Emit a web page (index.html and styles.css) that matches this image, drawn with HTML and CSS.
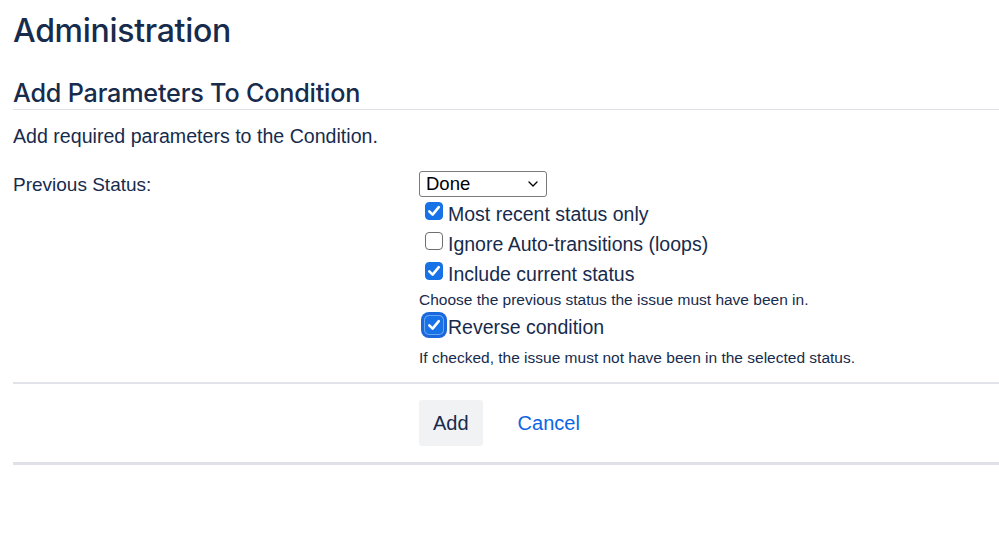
FILE: index.html
```html
<!DOCTYPE html>
<html lang="en">
<head>
<meta charset="utf-8">
<title>Administration</title>
<link rel="stylesheet" href="styles.css">
</head>
<body>
<main class="page">
  <h1 class="title">Administration</h1>
  <h2 class="section-title">Add Parameters To Condition</h2>
  <p class="intro">Add required parameters to the Condition.</p>

  <form class="form">
    <div class="field">
      <label class="field-label">Previous Status:</label>
      <div class="field-body">
        <div class="select">
          <span class="select-value">Done</span>
          <svg class="chevron" width="10" height="6" viewBox="0 0 10 6"><path d="M1 1 L5 5 L9 1" fill="none" stroke="#000" stroke-width="1.3" stroke-linecap="round" stroke-linejoin="round"/></svg>
        </div>
        <div class="checks">
          <label class="check"><span class="cb is-checked"><svg viewBox="0 0 18 18" width="18" height="18"><path d="M4.3 9.4 L7.6 12.6 L13.8 5.2" fill="none" stroke="#fff" stroke-width="2.6" stroke-linecap="round" stroke-linejoin="round"/></svg></span><span class="check-text">Most recent status only</span></label>
          <label class="check"><span class="cb"></span><span class="check-text">Ignore Auto-transitions (loops)</span></label>
          <label class="check"><span class="cb is-checked"><svg viewBox="0 0 18 18" width="18" height="18"><path d="M4.3 9.4 L7.6 12.6 L13.8 5.2" fill="none" stroke="#fff" stroke-width="2.6" stroke-linecap="round" stroke-linejoin="round"/></svg></span><span class="check-text">Include current status</span></label>
        </div>
        <div class="desc desc-first">Choose the previous status the issue must have been in.</div>
        <label class="check check-reverse"><span class="cb is-checked cb-focus"><svg viewBox="0 0 18 18" width="18" height="18"><path d="M4.3 9.4 L7.6 12.6 L13.8 5.2" fill="none" stroke="#fff" stroke-width="2.6" stroke-linecap="round" stroke-linejoin="round"/></svg></span><span class="check-text">Reverse condition</span></label>
        <div class="desc desc-second">If checked, the issue must not have been in the selected status.</div>
      </div>
    </div>
    <div class="divider"></div>
    <div class="buttons">
      <button type="button" class="btn">Add</button>
      <a class="link" href="#">Cancel</a>
    </div>
    <div class="bottom-line"></div>
  </form>
</main>
</body>
</html>
```
FILE: styles.css
```css
html, body {
  margin: 0;
  padding: 0;
  background: #ffffff;
}

body {
  font-family: "Liberation Sans", Arial, sans-serif;
  color: #172b4d;
}

.page {
  padding-left: 13px;
}

.title {
  margin: 0;
  padding-top: 11px;
  font-family: Inter, "Liberation Sans", sans-serif;
  font-weight: 500;
  font-size: 32px;
  line-height: 40px;
  letter-spacing: -0.3px;
  color: #172b4d;
}

.section-title {
  margin: 27px 0 0;
  padding-bottom: 1px;
  font-family: Inter, "Liberation Sans", sans-serif;
  font-weight: 500;
  font-size: 25.2px;
  line-height: 30px;
  letter-spacing: -0.2px;
  color: #172b4d;
  border-bottom: 1px solid #dfe1e6;
}

.intro {
  margin: 14px 0 0;
  font-size: 19.6px;
  line-height: 24px;
}

.form {
  margin: 23px 0 0;
}

.field {
  display: grid;
  grid-template-columns: 406px 1fr;
}

.field-label {
  padding-top: 2px;
  font-size: 19px;
  line-height: 24px;
}

.field-body {
  display: flex;
  flex-direction: column;
  align-items: flex-start;
}

.select {
  box-sizing: border-box;
  width: 128px;
  height: 26px;
  border: 1px solid #7a7a7a;
  border-radius: 3px;
  display: flex;
  align-items: center;
  justify-content: space-between;
  padding: 0 8px 0 6px;
  color: #000;
  font-size: 18.5px;
}

.chevron {
  display: block;
}

.checks {
  margin-top: 2px;
  display: flex;
  flex-direction: column;
}

.check {
  display: flex;
  align-items: flex-start;
  height: 30px;
  font-size: 19.5px;
  line-height: 30px;
  color: #172b4d;
}

.check-text {
  margin-left: 5px;
}

.cb {
  box-sizing: border-box;
  width: 18px;
  height: 18px;
  margin: 3px 0 0 6px;
  border: 1.5px solid #6f6f6f;
  border-radius: 4px;
  background: #fff;
  flex: none;
  position: relative;
}

.cb svg {
  display: block;
  position: absolute;
  left: -1.5px;
  top: -1.5px;
}

.cb.is-checked {
  background: #1672e6;
  border-color: #1672e6;
}

.desc {
  font-size: 15.5px;
  line-height: 20px;
  color: #172b4d;
}

.desc-first {
  margin-top: 1px;
}

.check-reverse {
  margin-top: 2px;
}

.cb-focus {
  margin-top: 4px;
  box-shadow: 0 0 0 1px #6aa5f3, 0 0 0 4px #1a68dc;
}

.desc-second {
  margin-top: 6px;
}

.divider {
  margin-top: 14px;
  height: 2px;
  background: #e1e3e8;
}

.buttons {
  margin: 16px 0 0 406px;
  display: flex;
  align-items: center;
}

.btn {
  box-sizing: border-box;
  height: 46px;
  padding: 0 14px;
  border: none;
  border-radius: 3px;
  background: #f1f2f4;
  color: #172b4d;
  font-family: "Liberation Sans", Arial, sans-serif;
  font-size: 20px;
  cursor: pointer;
}

.link {
  margin-left: 35px;
  font-size: 20px;
  color: #0c66e4;
  text-decoration: none;
}

.bottom-line {
  margin-top: 16px;
  height: 3px;
  background: #dfe1e6;
}
```
